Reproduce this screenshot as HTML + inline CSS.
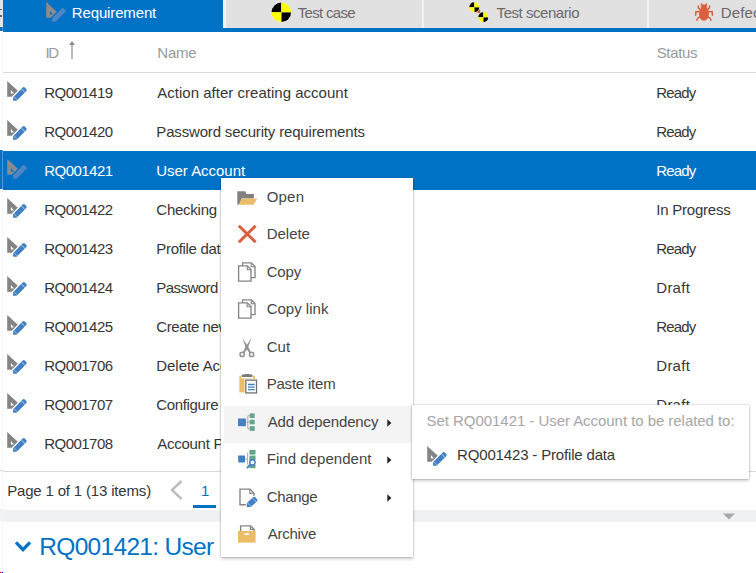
<!DOCTYPE html>
<html><head><meta charset="utf-8"><title>Requirements</title>
<style>
html,body{margin:0;padding:0;background:#fff;}
body{width:756px;height:573px;overflow:hidden;font-family:"Liberation Sans",sans-serif;}
#app{position:relative;width:756px;height:573px;overflow:hidden;background:#fff;}
.a{position:absolute;}
.t{position:absolute;white-space:nowrap;line-height:1;font-family:"Liberation Sans",sans-serif;}
svg.ic{position:absolute;overflow:visible;}
</style></head>
<body>
<svg width="0" height="0" style="position:absolute">
<defs>
<symbol id="req" viewBox="0 0 24 24">
  <path d="M2.2 1.9 L2.2 17.8 L8.5 17.8 L14.2 12.95 Z M5.9 11 L5.9 14.6 L9 14.6 Z" fill="#848484" fill-rule="evenodd"/>
  <g transform="translate(8.1,21.7) rotate(-45)">
    <path d="M0 0 L2.5 -2.5 L16 -2.5 Q17.6 -2.5 17.6 -1 L17.6 1 Q17.6 2.5 16 2.5 L2.5 2.5 Z" fill="#ffffff" stroke="#ffffff" stroke-width="2.6" stroke-linejoin="round"/>
    <path d="M0 0 L2.5 -2.5 L16 -2.5 Q17.6 -2.5 17.6 -1 L17.6 1 Q17.6 2.5 16 2.5 L2.5 2.5 Z" fill="#4280c2"/>
    <path d="M3.4 -2.5 L3.4 2.5" fill="none" stroke="#a9c6e6" stroke-width="0.8"/>
    <path d="M14.2 -2.5 L14.2 2.5" stroke="#c4d8ee" stroke-width="0.9"/>
  </g>
</symbol>
<symbol id="reqsel" viewBox="0 0 24 24">
  <path d="M2.2 1.9 L2.2 17.8 L8.5 17.8 L14.2 12.95 Z M5.9 11 L5.9 14.6 L9 14.6 Z" fill="#8c8c8c" fill-rule="evenodd"/>
  <g transform="translate(8.1,21.7) rotate(-45)">
    <path d="M0 0 L2.5 -2.5 L16 -2.5 Q17.6 -2.5 17.6 -1 L17.6 1 Q17.6 2.5 16 2.5 L2.5 2.5 Z" fill="#0072c6" stroke="#0072c6" stroke-width="2.6" stroke-linejoin="round"/>
    <path d="M0 0 L2.5 -2.5 L16 -2.5 Q17.6 -2.5 17.6 -1 L17.6 1 Q17.6 2.5 16 2.5 L2.5 2.5 Z" fill="#4f86c4"/>
    <path d="M14.2 -2.5 L14.2 2.5" stroke="#3a7fc6" stroke-width="0.9"/>
  </g>
</symbol>
<symbol id="crash" viewBox="0 0 20 20">
  <circle cx="10" cy="10" r="9.9" fill="#ffffff" fill-opacity="0.55"/>
  <path d="M10 10 L10 0.5 A9.5 9.5 0 0 0 0.5 10 Z" fill="#000"/>
  <path d="M10 10 L10 19.5 A9.5 9.5 0 0 0 19.5 10 Z" fill="#000"/>
  <path d="M10 10 L10 0.5 A9.5 9.5 0 0 1 19.5 10 Z" fill="#ffff00"/>
  <path d="M10 10 L10 19.5 A9.5 9.5 0 0 1 0.5 10 Z" fill="#ffff00"/>
</symbol>
<symbol id="bug" viewBox="0 0 20 20">
  <g fill="#d8603c" stroke="#d8603c">
  <ellipse cx="10" cy="11.5" rx="5.2" ry="6.3" stroke="none"/>
  <circle cx="10" cy="5" r="2.6" stroke="none"/>
  <path d="M8.4 3.6 L6.8 0.8 M11.6 3.6 L13.2 0.8" fill="none" stroke-width="1.2"/>
  <path d="M5.2 8.6 L2.4 7 L1.4 9.6 M14.8 8.6 L17.6 7 L18.6 9.6" fill="none" stroke-width="1.3"/>
  <path d="M4.8 11.6 L1 11.8 M15.2 11.6 L19 11.8" fill="none" stroke-width="1.3"/>
  <path d="M5.4 14.4 L2.4 15.8 L2 18.2 M14.6 14.4 L17.6 15.8 L18 18.2" fill="none" stroke-width="1.3"/>
  </g>
</symbol>
<symbol id="i-open" viewBox="0 0 24 24">
  <path d="M1.3 4.3 L9.3 4.3 L10.4 7 L17.9 7 L17.9 11.6 L5.7 11.6 L3.1 17.4 L1.3 17.4 Z" fill="#808080"/>
  <path d="M5.9 11.6 L21.2 11.6 L17.5 17.7 L2.9 17.7 Z" fill="#eabd66"/>
</symbol>
<symbol id="i-del" viewBox="0 0 24 24">
  <path d="M2.8 1.8 L19.6 18.2 M19.6 1.8 L2.8 18.2" stroke="#d9603f" stroke-width="3" fill="none"/>
</symbol>
<symbol id="i-copy" viewBox="0 0 24 24">
  <path d="M6.6 0.9 L15.4 0.9 L19 4.6 L19 15.6 L6.6 15.6 Z" fill="#fff" stroke="#858585" stroke-width="1.35"/>
  <path d="M15.2 1 L15.2 4.8 L19 4.8" fill="none" stroke="#858585" stroke-width="1.1"/>
  <path d="M2.6 3.9 L11.4 3.9 L15 7.6 L15 19.1 L2.6 19.1 Z" fill="#fff" stroke="#858585" stroke-width="1.35"/>
  <path d="M11.2 4 L11.2 7.8 L15 7.8" fill="none" stroke="#858585" stroke-width="1.1"/>
</symbol>
<symbol id="i-cut" viewBox="0 0 24 24">
  <path d="M6.3 1 L12.3 10 L14.8 15.2 L13.2 15.9 L9.7 10.6 Z" fill="#909090"/>
  <path d="M15.4 1 L9.4 10 L6.9 15.2 L8.5 15.9 L12 10.6 Z" fill="#909090"/>
  <circle cx="6.1" cy="17.4" r="2.1" fill="none" stroke="#909090" stroke-width="1.5"/>
  <circle cx="15.6" cy="17.4" r="2.1" fill="none" stroke="#909090" stroke-width="1.5"/>
</symbol>
<symbol id="i-paste" viewBox="0 0 24 24">
  <rect x="3.4" y="1.7" width="15.6" height="16.7" fill="#eabd66"/>
  <rect x="5.2" y="1.2" width="11.8" height="3.2" fill="#fff"/>
  <path d="M5.8 3 L5.8 0.6 L8.6 0.6 L9.4 -0.9 L12.8 -0.9 L13.6 0.6 L16.4 0.6 L16.4 3 Z" fill="#7a7a7a"/>
  <rect x="8.5" y="4.8" width="13.2" height="15.4" fill="#fff"/>
  <rect x="9.8" y="6.15" width="10.7" height="12.8" fill="#fff" stroke="#707070" stroke-width="1.3"/>
  <path d="M12 10.5 H18.7 M12 13.1 H18.7 M12 15.7 H18.7" stroke="#4280c0" stroke-width="1.3"/>
</symbol>
<symbol id="i-dep" viewBox="0 0 24 24">
  <path d="M9.9 10.3 H11.8 M11.8 3.7 V16.6 M11.8 3.7 H13.7 M11.8 10 H13.7 M11.8 16.6 H13.7" stroke="#a0a0a0" stroke-width="0.9" fill="none"/>
  <rect x="2" y="6.5" width="7.9" height="7.7" fill="#4280c0"/>
  <rect x="13.7" y="1.4" width="5" height="4.6" fill="#63a48a"/>
  <rect x="13.7" y="7.7" width="5" height="4.6" fill="#63a48a"/>
  <rect x="13.7" y="14.2" width="5" height="4.7" fill="#63a48a"/>
</symbol>
<symbol id="i-find" viewBox="0 0 24 24">
  <path d="M9 10.2 H11.6 M11.6 3.6 V15.6" stroke="#a0a0a0" stroke-width="0.9" fill="none"/>
  <rect x="2.2" y="6.5" width="6.8" height="7" fill="#4280c0"/>
  <rect x="13.4" y="0.9" width="6.1" height="4.7" fill="#63a48a"/>
  <rect x="13.4" y="6.6" width="6.1" height="4.7" fill="#63a48a"/>
  <rect x="13.4" y="16" width="6.1" height="3.2" fill="#63a48a"/>
  <circle cx="16.4" cy="13.4" r="2.7" fill="#fff" stroke="#4280c0" stroke-width="1.5"/>
  <path d="M14.3 15.6 L11.5 18.5" stroke="#4280c0" stroke-width="1.9" stroke-linecap="round"/>
</symbol>
<symbol id="i-change" viewBox="0 0 24 24">
  <path d="M12 17.8 L4 17.8 L4 2.1 L14 2.1 L18 6.2 L18 11" fill="none" stroke="#858585" stroke-width="1.4"/>
  <path d="M13.8 2.3 L13.8 6.4 L17.9 6.4" fill="none" stroke="#858585" stroke-width="1.1"/>
  <g transform="translate(10.8,19.9) rotate(-43)">
    <path d="M0 0 L2.8 -2.8 L11 -2.8 Q12.8 -2.8 12.8 -1 L12.8 1 Q12.8 2.8 11 2.8 L2.8 2.8 Z" fill="#fff" stroke="#fff" stroke-width="1.8"/>
    <path d="M0 0 L2.8 -2.8 L11 -2.8 Q12.8 -2.8 12.8 -1 L12.8 1 Q12.8 2.8 11 2.8 L2.8 2.8 Z" fill="#4280c2"/>
    <path d="M3.4 -2.8 L3.4 2.8 M10.2 -2.8 L10.2 2.8" stroke="#b4cdea" stroke-width="0.8"/>
  </g>
</symbol>
<symbol id="i-arch" viewBox="0 0 24 24">
  <path d="M4.6 7 L4.6 1.9 L14.6 1.9 L18.1 5.2 L18.1 7" fill="#fff" stroke="#858585" stroke-width="1.35"/>
  <path d="M14.4 2 L14.4 5.4 L18 5.4" fill="none" stroke="#858585" stroke-width="1.1"/>
  <rect x="2" y="7" width="17.6" height="11.6" fill="#eabd66"/>
  <rect x="8.6" y="9.2" width="4.6" height="1.9" fill="#fff"/>
</symbol>
</defs>
</svg>

<div id="app">
  <!-- left strip -->
  <div class="a" style="left:0;top:0;width:3px;height:27px;background:#e4e4e4"></div>
  <div class="a" style="left:2px;top:31px;width:1px;height:540px;background:#f7f7f7"></div>
  <div class="a" style="left:0;top:469.6px;width:2.6px;height:1px;background:#dadada"></div>
  <div class="a" style="left:0;top:509.3px;width:3px;height:11.7px;background:#f3f3f4"></div>
  <div class="a" style="left:0;top:150px;width:3px;height:38.8px;background:#4f9ad8"></div>
  <div class="a" style="left:0;top:150px;width:2.1px;height:38.8px;background:#0072c6"></div>
  <div class="a" style="left:0;top:9.2px;width:1.8px;height:1.2px;background:#666"></div>
  <div class="a" style="left:0;top:15.3px;width:1.8px;height:1.4px;background:#666"></div>
  <!-- tabs -->
  <div class="a" style="left:3px;top:28px;width:753px;height:4px;background:#0072c6"></div>
  <div class="a" style="left:0;top:27px;width:3px;height:4px;background:#3f90d4"></div>
  <div class="a" style="left:0;top:27px;width:2.2px;height:4px;background:#0072c6"></div>
  <div class="a" style="left:3px;top:0;width:220px;height:29px;background:#0072c6"></div>
  <div class="a" style="left:223px;top:0;width:533px;height:28px;background:#f0f1f3"></div>
  <div class="a" style="left:226px;top:0;width:196px;height:28px;background:#e1e1e1"></div>
  <div class="a" style="left:424px;top:0;width:223px;height:28px;background:#e1e1e1"></div>
  <div class="a" style="left:649px;top:0;width:107px;height:28px;background:#e1e1e1"></div>
  <svg class="ic" style="left:44px;top:0px" width="24" height="24"><use href="#reqsel"/></svg>
  <svg class="ic" style="left:270.7px;top:1.65px" width="20.6" height="20.6"><use href="#crash"/></svg>
  <svg class="ic" style="left:468.9px;top:2.1px" width="10.6" height="10.6"><use href="#crash"/></svg>
  <svg class="ic" style="left:478.3px;top:11.9px" width="10.6" height="10.6"><use href="#crash"/></svg>
  <svg class="ic" style="left:474px;top:8px" width="8" height="8" viewBox="474 8 8 8"><path d="M480 9.2 L476.2 12.6 L480.3 13 Z" fill="#e0502e"/></svg>
  <svg class="ic" style="left:694px;top:0px" width="20" height="24" viewBox="694 0 20 24"><g fill="#d9603f" stroke="#d9603f" stroke-linecap="round" stroke-linejoin="round"><ellipse cx="703.95" cy="13.9" rx="5" ry="6.8" stroke="none"/><path d="M701.2 9 L701.2 3.1 L702.9 5.2 L703.95 4.5 L705 5.2 L706.7 3.1 L706.7 9 Z" stroke-width="0.6"/><path d="M700 9.4 L698.4 7.9 L698.3 6 M707.9 9.4 L709.5 7.9 L709.6 6 M699.6 11.7 L695.9 11.5 L695.7 15.2 M708.3 11.7 L712.2 11.5 L712.4 15.2 M700 16.6 L697.5 18.6 L696.9 20.2 M707.9 16.6 L710.4 18.6 L711 20.2" fill="none" stroke-width="1.5"/></g></svg>
  <!-- header -->
  <div class="a" style="left:3px;top:71.5px;width:753px;height:1px;background:#d8d8d8"></div>
  <svg class="ic" style="left:68px;top:41px" width="8" height="19" viewBox="0 0 8 19"><path d="M4 17.9 V3" fill="none" stroke="#a2a2a2" stroke-width="1.5"/><path d="M4 0 L1 4.1 L7 4.1 Z" fill="#8e8e8e"/></svg>
  <!-- selected row -->
  <div class="a" style="left:3px;top:151px;width:753px;height:39px;background:#0072c6"></div>
  <!-- row icons -->
  <svg class="ic" style="left:5px;top:79px" width="24" height="24"><use href="#req"/></svg>
  <svg class="ic" style="left:5px;top:118px" width="24" height="24"><use href="#req"/></svg>
  <svg class="ic" style="left:5px;top:157px" width="24" height="24"><use href="#reqsel"/></svg>
  <svg class="ic" style="left:5px;top:196px" width="24" height="24"><use href="#req"/></svg>
  <svg class="ic" style="left:5px;top:235px" width="24" height="24"><use href="#req"/></svg>
  <svg class="ic" style="left:5px;top:274px" width="24" height="24"><use href="#req"/></svg>
  <svg class="ic" style="left:5px;top:313px" width="24" height="24"><use href="#req"/></svg>
  <svg class="ic" style="left:5px;top:352px" width="24" height="24"><use href="#req"/></svg>
  <svg class="ic" style="left:5px;top:391px" width="24" height="24"><use href="#req"/></svg>
  <svg class="ic" style="left:5px;top:430px" width="24" height="24"><use href="#req"/></svg>
  <!-- pager -->
  <div class="a" style="left:3px;top:470.5px;width:753px;height:1px;background:#d8d8d8"></div>
  <svg class="ic" style="left:169px;top:479.4px" width="16" height="22" viewBox="0 0 16 22"><path d="M12.6 2 L2.9 11 L12.6 20" fill="none" stroke="#bcbcbc" stroke-width="2.4"/></svg>
  <div class="a" style="left:193px;top:505px;width:23.1px;height:3px;background:#0072c6"></div>
  <div class="a" style="left:3px;top:510px;width:753px;height:11.7px;background:#f0f1f2"></div>
  <svg class="ic" style="left:722px;top:513px" width="14" height="8" viewBox="0 0 14 8"><path d="M0.8 0.5 L13 0.5 L6.9 6.6 Z" fill="#a8a8a8"/></svg>
  <div class="a" style="left:0;top:571.6px;width:1px;height:1.4px;background:#ff0000"></div>
  <div class="a" style="left:1px;top:571.6px;width:1px;height:1.4px;background:#00ff00"></div>
  <div class="a" style="left:2px;top:571.6px;width:1px;height:1.4px;background:#0000ff"></div>
  <!-- title -->
  <svg class="ic" style="left:14px;top:540px" width="18" height="13" viewBox="0 0 18 13"><path d="M2 2.4 L9 9.6 L16 2.4" fill="none" stroke="#0072c6" stroke-width="3.2"/></svg>
<span class="t" id="tab1" style="left:71.8px;top:5.0px;font-size:15px;color:#ffffff;letter-spacing:-0.140px">Requirement</span>
<span class="t" id="tab2" style="left:297.7px;top:5.0px;font-size:15px;color:#6a6a6a;letter-spacing:-0.688px">Test case</span>
<span class="t" id="tab3" style="left:496.6px;top:5.0px;font-size:15px;color:#6a6a6a;letter-spacing:-0.458px">Test scenario</span>
<span class="t" id="tab4" style="left:720.7px;top:5.0px;font-size:15px;color:#6a6a6a;letter-spacing:0.160px">Defect</span>
<span class="t" id="h1" style="left:45.4px;top:45.0px;font-size:15px;color:#999999;letter-spacing:-1.300px">ID</span>
<span class="t" id="h2" style="left:157.3px;top:45.0px;font-size:15px;color:#999999;letter-spacing:-0.200px">Name</span>
<span class="t" id="h3" style="left:656.7px;top:45.0px;font-size:15px;color:#999999;letter-spacing:-0.340px">Status</span>
<span class="t" id="id0" style="left:44.3px;top:85.0px;font-size:15px;color:#363636;letter-spacing:-0.543px">RQ001419</span>
<span class="t" id="nm0" style="left:157.3px;top:85.0px;font-size:15px;color:#363636;letter-spacing:0.014px">Action after creating account</span>
<span class="t" id="st0" style="left:656.3px;top:85.0px;font-size:15px;color:#363636;letter-spacing:-0.850px">Ready</span>
<span class="t" id="id1" style="left:44.3px;top:124.0px;font-size:15px;color:#363636;letter-spacing:-0.543px">RQ001420</span>
<span class="t" id="nm1" style="left:156.3px;top:124.0px;font-size:15px;color:#363636;letter-spacing:-0.166px">Password security requirements</span>
<span class="t" id="st1" style="left:656.3px;top:124.0px;font-size:15px;color:#363636;letter-spacing:-0.850px">Ready</span>
<span class="t" id="id2" style="left:44.3px;top:163.0px;font-size:15px;color:#ffffff;letter-spacing:-0.543px">RQ001421</span>
<span class="t" id="nm2" style="left:156.3px;top:163.0px;font-size:15px;color:#ffffff;letter-spacing:-0.036px">User Account</span>
<span class="t" id="st2" style="left:656.3px;top:163.0px;font-size:15px;color:#ffffff;letter-spacing:-0.850px">Ready</span>
<span class="t" id="id3" style="left:44.3px;top:202.0px;font-size:15px;color:#363636;letter-spacing:-0.543px">RQ001422</span>
<span class="t" id="nm3" style="left:156.3px;top:202.0px;font-size:15px;color:#363636;letter-spacing:-0.243px">Checking user data</span>
<span class="t" id="st3" style="left:656.3px;top:202.0px;font-size:15px;color:#363636;letter-spacing:-0.230px">In Progress</span>
<span class="t" id="id4" style="left:44.3px;top:241.0px;font-size:15px;color:#363636;letter-spacing:-0.543px">RQ001423</span>
<span class="t" id="nm4" style="left:156.3px;top:241.0px;font-size:15px;color:#363636;letter-spacing:-0.322px">Profile data</span>
<span class="t" id="st4" style="left:656.3px;top:241.0px;font-size:15px;color:#363636;letter-spacing:-0.850px">Ready</span>
<span class="t" id="id5" style="left:44.3px;top:280.0px;font-size:15px;color:#363636;letter-spacing:-0.543px">RQ001424</span>
<span class="t" id="nm5" style="left:156.3px;top:280.0px;font-size:15px;color:#363636;letter-spacing:-0.557px">Password recovery</span>
<span class="t" id="st5" style="left:656.3px;top:280.0px;font-size:15px;color:#363636;letter-spacing:0.250px">Draft</span>
<span class="t" id="id6" style="left:44.3px;top:319.0px;font-size:15px;color:#363636;letter-spacing:-0.543px">RQ001425</span>
<span class="t" id="nm6" style="left:156.3px;top:319.0px;font-size:15px;color:#363636;letter-spacing:-0.413px">Create new account</span>
<span class="t" id="st6" style="left:656.3px;top:319.0px;font-size:15px;color:#363636;letter-spacing:-0.850px">Ready</span>
<span class="t" id="id7" style="left:44.3px;top:358.0px;font-size:15px;color:#363636;letter-spacing:-0.543px">RQ001706</span>
<span class="t" id="nm7" style="left:156.3px;top:358.0px;font-size:15px;color:#363636;letter-spacing:-0.050px">Delete Account</span>
<span class="t" id="st7" style="left:656.3px;top:358.0px;font-size:15px;color:#363636;letter-spacing:0.250px">Draft</span>
<span class="t" id="id8" style="left:44.3px;top:397.0px;font-size:15px;color:#363636;letter-spacing:-0.543px">RQ001707</span>
<span class="t" id="nm8" style="left:156.3px;top:397.0px;font-size:15px;color:#363636;letter-spacing:-0.350px">Configure account</span>
<span class="t" id="st8" style="left:656.3px;top:397.0px;font-size:15px;color:#363636;letter-spacing:0.250px">Draft</span>
<span class="t" id="id9" style="left:44.3px;top:436.0px;font-size:15px;color:#363636;letter-spacing:-0.543px">RQ001708</span>
<span class="t" id="nm9" style="left:157.3px;top:436.0px;font-size:15px;color:#363636;letter-spacing:-0.283px">Account Profile</span>
<span class="t" id="st9" style="left:656.3px;top:436.0px;font-size:15px;color:#363636;letter-spacing:0.250px">Draft</span>
<span class="t" id="pg" style="left:7.2px;top:483.0px;font-size:15px;color:#363636;letter-spacing:-0.171px">Page 1 of 1 (13 items)</span>
<span class="t" id="pg1" style="left:201.0px;top:483.0px;font-size:15px;color:#0072c6;letter-spacing:0.000px">1</span>
<span class="t" id="title" style="left:39.3px;top:535.0px;font-size:24.5px;color:#0072c6;letter-spacing:-0.692px">RQ001421: User</span>
  <!-- context menu -->
  <div class="a" style="left:221.1px;top:178px;width:192px;height:379px;background:#fff;box-shadow:0 0 1.5px rgba(0,0,0,.35),0 2px 3px rgba(0,0,0,.2)"></div>
  <div class="a" style="left:224px;top:405.5px;width:188px;height:37px;background:#f4f4f4"></div>
  <!-- submenu -->
  <div class="a" style="left:412.3px;top:405.3px;width:336.5px;height:73.6px;background:#fff;box-shadow:0 0 1.5px rgba(0,0,0,.35),0 2px 3px rgba(0,0,0,.2)"></div>
  <svg class="ic" style="left:236px;top:186.75px" width="24" height="24"><use href="#i-open"/></svg>
  <svg class="ic" style="left:236px;top:224.25px" width="24" height="24"><use href="#i-del"/></svg>
  <svg class="ic" style="left:236px;top:261.75px" width="24" height="24"><use href="#i-copy"/></svg>
  <svg class="ic" style="left:236px;top:299.25px" width="24" height="24"><use href="#i-copy"/></svg>
  <svg class="ic" style="left:236px;top:336.75px" width="24" height="24"><use href="#i-cut"/></svg>
  <svg class="ic" style="left:236px;top:374.25px" width="24" height="24"><use href="#i-paste"/></svg>
  <svg class="ic" style="left:236px;top:411.75px" width="24" height="24"><use href="#i-dep"/></svg>
  <svg class="ic" style="left:236px;top:449.25px" width="24" height="24"><use href="#i-find"/></svg>
  <svg class="ic" style="left:236px;top:486.75px" width="24" height="24"><use href="#i-change"/></svg>
  <svg class="ic" style="left:236px;top:524.25px" width="24" height="24"><use href="#i-arch"/></svg>
  <svg class="ic" style="left:386.8px;top:419px" width="5" height="8" viewBox="0 0 5 8"><path d="M0.3 0.3 L4.4 4 L0.3 7.7 Z" fill="#222"/></svg>
  <svg class="ic" style="left:386.8px;top:456.1px" width="5" height="8" viewBox="0 0 5 8"><path d="M0.3 0.3 L4.4 4 L0.3 7.7 Z" fill="#222"/></svg>
  <svg class="ic" style="left:386.8px;top:494px" width="5" height="8" viewBox="0 0 5 8"><path d="M0.3 0.3 L4.4 4 L0.3 7.7 Z" fill="#222"/></svg>
  <svg class="ic" style="left:425px;top:443.8px" width="24" height="24"><use href="#req"/></svg>
<span class="t" id="m0" style="left:266.7px;top:189.0px;font-size:15px;color:#444444;letter-spacing:0.200px">Open</span>
<span class="t" id="m1" style="left:266.7px;top:226.0px;font-size:15px;color:#444444;letter-spacing:-0.020px">Delete</span>
<span class="t" id="m2" style="left:266.7px;top:264.0px;font-size:15px;color:#444444;letter-spacing:-0.167px">Copy</span>
<span class="t" id="m3" style="left:266.7px;top:301.0px;font-size:15px;color:#444444;letter-spacing:0.000px">Copy link</span>
<span class="t" id="m4" style="left:266.7px;top:339.0px;font-size:15px;color:#444444;letter-spacing:0.050px">Cut</span>
<span class="t" id="m5" style="left:266.7px;top:376.0px;font-size:15px;color:#444444;letter-spacing:-0.211px">Paste item</span>
<span class="t" id="m6" style="left:267.7px;top:414.0px;font-size:15px;color:#444444;letter-spacing:-0.146px">Add dependency</span>
<span class="t" id="m7" style="left:266.7px;top:451.0px;font-size:15px;color:#444444;letter-spacing:0.046px">Find dependent</span>
<span class="t" id="m8" style="left:266.7px;top:489.0px;font-size:15px;color:#444444;letter-spacing:-0.340px">Change</span>
<span class="t" id="m9" style="left:267.7px;top:526.0px;font-size:15px;color:#444444;letter-spacing:-0.233px">Archive</span>
<span class="t" id="s1" style="left:426.6px;top:413.0px;font-size:15px;color:#a6a6a6;letter-spacing:-0.050px">Set RQ001421 - User Account to be related to:</span>
<span class="t" id="s2" style="left:457.1px;top:447.0px;font-size:15px;color:#363636;letter-spacing:-0.168px">RQ001423 - Profile data</span>
</div>
</body></html>
